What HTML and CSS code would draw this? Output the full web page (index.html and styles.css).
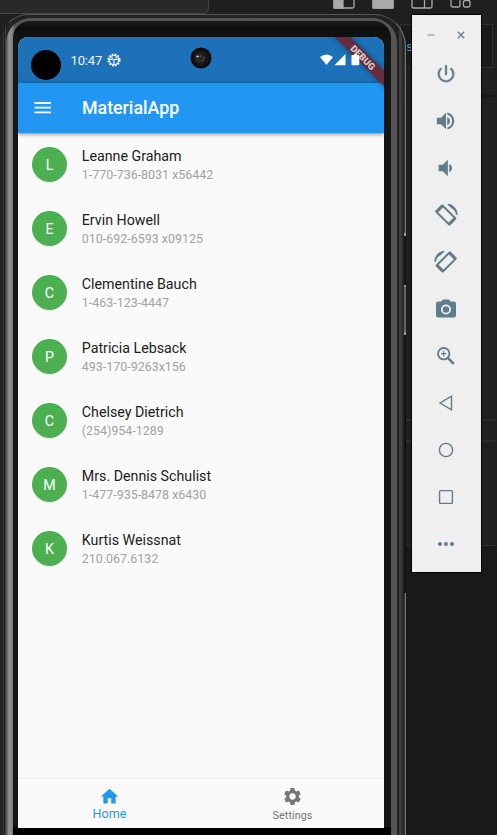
FILE: index.html
```
<!DOCTYPE html>
<html lang="en">
<head>
<meta charset="utf-8">
<title>MaterialApp</title>
<link rel="stylesheet" href="styles.css">
</head>
<body>
<div class="desktop">
  <div class="tab-window"></div>
  <div class="layout-icons">
    <svg viewBox="0 0 22 20"><rect x="1" y="1" width="20" height="18" rx="1.5"/><path class="solid" d="M1 1h9v18H1z"/></svg>
    <svg viewBox="0 0 22 20"><rect x="1" y="1" width="20" height="18" rx="1.5"/><path class="solid" d="M1 10h20v9H1z"/></svg>
    <svg viewBox="0 0 22 20"><rect x="1" y="1" width="20" height="18" rx="1.5"/><path d="M13.5 1v18"/></svg>
    <svg viewBox="0 0 22 20"><rect x="1" y="1" width="9" height="17" rx="1.500"/><rect x="13.500" y="11.500" width="6.500" height="6.500" rx="1.500"/></svg>
  </div>
  <div class="editor-strip"><span>s</span></div>
  <div class="panel-lines"></div>

  <div class="phone">
    <div class="rim"><div class="bezel">
      <div class="screen">
        <header class="status-bar">
          <span class="cutout"></span>
          <span class="clock">10:47</span>
          <svg class="status-gear" viewBox="0 0 14 14"><circle cx="7" cy="7" r="5.700" class="teeth"/><circle cx="7" cy="7" r="4.600" class="ring"/><path d="M2.800 6.500h8.400M7 6.500v4.600M5 3.500v3M9 3.500v3" class="ring"/></svg>
          <svg class="lens" viewBox="0 0 22 22"><circle cx="11" cy="11" r="10.500" fill="#0c0c0c"/><circle cx="11" cy="11" r="8" fill="#171717"/><circle cx="10" cy="11" r="5" fill="#262624"/><circle cx="7.500" cy="9.500" r="1.100" fill="#d8d8d8"/><circle cx="10.200" cy="9.300" r=".9" fill="#66665f"/><circle cx="14" cy="11" r=".9" fill="#624735"/><circle cx="12.700" cy="13.600" r=".9" fill="#735742"/></svg>
          <svg class="signals" viewBox="0 0 40 12"><path d="M0 3.100Q6.500-2 13 3.100L6.500 11z"/><path d="M25.500 0v11.300H14.500z"/><path d="M34 0h3v1h1.500q.8 0 .8.8v8.700q0 .8-.8.8h-6.200q-.8 0-.8-.8V1.800q0-.8.8-.8H34z"/></svg>
        </header>
        <div class="app-bar">
          <svg class="menu" viewBox="0 0 18 12"><path d="M.4 0h16.600v1.900H.4zM.4 4.700h16.600v1.900H.4zM.4 9.400h16.600v1.900H.4z"/></svg>
          <h1>MaterialApp</h1>
        </div>
        <main class="contacts">
          <div class="contact"><b>L</b><div><p>Leanne Graham</p><small>1-770-736-8031 x56442</small></div></div>
          <div class="contact"><b>E</b><div><p>Ervin Howell</p><small>010-692-6593 x09125</small></div></div>
          <div class="contact"><b>C</b><div><p>Clementine Bauch</p><small>1-463-123-4447</small></div></div>
          <div class="contact"><b>P</b><div><p>Patricia Lebsack</p><small>493-170-9263x156</small></div></div>
          <div class="contact"><b>C</b><div><p>Chelsey Dietrich</p><small>(254)954-1289</small></div></div>
          <div class="contact"><b>M</b><div><p>Mrs. Dennis Schulist</p><small>1-477-935-8478 x6430</small></div></div>
          <div class="contact"><b>K</b><div><p>Kurtis Weissnat</p><small>210.067.6132</small></div></div>
        </main>
        <nav class="bottom-nav">
          <div class="nav-item active"><svg viewBox="0 0 24 24"><path d="M10 20v-6h4v6h5v-8h3L12 3 2 12h3v8z"/></svg><span>Home</span></div>
          <div class="nav-item"><svg viewBox="0 0 24 24"><path d="M19.140 12.940c.04-.3.06-.61.06-.94 0-.32-.02-.64-.07-.94l2.030-1.580c.18-.14.23-.41.12-.61l-1.920-3.320c-.12-.22-.37-.29-.59-.22l-2.390.96c-.5-.38-1.030-.7-1.620-.94l-.36-2.540c-.04-.24-.24-.41-.48-.41h-3.840c-.24 0-.43.17-.47.41l-.36 2.540c-.59.24-1.130.57-1.620.94l-2.390-.96c-.22-.08-.47 0-.59.22L2.740 8.870c-.12.21-.08.47.12.61l2.030 1.580c-.05.3-.09.63-.09.94s.02.64.07.94l-2.030 1.580c-.18.14-.23.41-.12.61l1.920 3.320c.12.22.37.29.59.22l2.390-.96c.5.38 1.030.7 1.620.94l.36 2.540c.05.24.24.41.48.41h3.840c.24 0 .44-.17.47-.41l.36-2.540c.59-.24 1.130-.56 1.620-.94l2.390.96c.22.08.47 0 .59-.22l1.920-3.320c.12-.22.07-.47-.12-.61l-2.010-1.580zM12 15.600A3.600 3.600 0 1 1 12 8.400a3.600 3.600 0 0 1 0 7.200z"/></svg><span>Settings</span></div>
        </nav>
        <div class="debug-ribbon">DEBUG</div>
      </div>
    </div></div>
    <div class="side-keys"></div>
  </div>

  <aside class="toolbar">
    <div class="window-buttons">
      <svg viewBox="0 0 10 10"><path d="M1.500 5h7" stroke="#a0b0b7" stroke-width="1.600"/></svg>
      <svg viewBox="0 0 10 10"><path d="M1.800 1.800l6.400 6.400M8.200 1.800L1.800 8.200" stroke="#607d8b" stroke-width="1.300"/></svg>
    </div>
    <div class="tools">
      <svg viewBox="0 0 24 24"><path d="M13 2.500h-2v10.500h2zM17.830 5.170l-1.420 1.420A6.900 6.900 0 0 1 19 12a7 7 0 1 1-11.420-5.420L6.170 5.170A8.900 8.900 0 0 0 3 12a9 9 0 1 0 18 0c0-2.740-1.230-5.180-3.170-6.830z" stroke="#607d8b" stroke-width=".5"/></svg>
      <svg viewBox="0 0 24 24"><path d="M2 8.500v7h4.500l5.500 5.500V3L6.500 8.500zM13.300 7.500v9A4.800 4.800 0 0 0 16.300 12a4.800 4.800 0 0 0-3-4.500zM13.500 2.700v2.400a7.200 7.200 0 0 1 0 13.800v2.400a9.500 9.500 0 0 0 0-18.600z"/></svg>
      <svg viewBox="0 0 24 24"><path d="M4 8.500v7h4.500l5.500 5.500V3L8.500 8.500zM15.500 7.500v9a4.800 4.800 0 0 0 3-4.500 4.800 4.800 0 0 0-3-4.500z"/></svg>
      <svg class="rotate" viewBox="0 0 24 24"><g transform="translate(24 0) scale(-1 1)"><path d="M7.300 5.500A9.200 9.200 0 0 1 10.700 2.500l-1-.8C5 2.500 1.400 6.700 1.100 11.700h1.700c.2-2.500 1.700-4.900 4.500-6.200z"/><path fill-rule="evenodd" d="M14.600 2.600c.5-.5 1.300-.5 1.800 0l5.200 5.200c.5.500.5 1.300 0 1.800L9.800 21.400c-.5.5-1.300.5-1.800 0l-5.200-5.200c-.5-.5-.5-1.300 0-1.800zM14.700 5L5.200 14.500l4.500 4.500 9.500-9.500z"/></g></svg>
      <svg class="rotate" viewBox="0 0 24 24"><path d="M7.300 5.500A9.200 9.200 0 0 1 10.700 2.500l-1-.8C5 2.500 1.400 6.700 1.100 11.700h1.700c.2-2.500 1.700-4.900 4.500-6.200z"/><path fill-rule="evenodd" d="M14.600 2.600c.5-.5 1.300-.5 1.800 0l5.200 5.200c.5.500.5 1.300 0 1.800L9.800 21.400c-.5.5-1.300.5-1.800 0l-5.200-5.200c-.5-.5-.5-1.300 0-1.800zM14.700 5L5.200 14.500l4.500 4.500 9.500-9.500z"/></svg>
      <svg class="large" viewBox="0 0 24 24"><path fill-rule="evenodd" d="M9 2.500L7.200 4.500H4a2 2 0 0 0-2 2v12a2 2 0 0 0 2 2h16a2 2 0 0 0 2-2v-12a2 2 0 0 0-2-2h-3.200L15 2.500zM12 7.500a5 5 0 1 1 0 10 5 5 0 0 1 0-10z"/><circle cx="12" cy="12.500" r="3.200"/></svg>
      <svg viewBox="0 0 24 24"><g fill="none" stroke="#607d8b"><circle cx="9.500" cy="9.500" r="6.200" stroke-width="2"/><path d="M14 14l6.500 6.500" stroke-width="2.700"/><path d="M6.500 9.500h6M9.500 6.500v6" stroke-width="1.300"/></g></svg>
      <svg viewBox="0 0 24 24"><path class="line" d="M18 4.500v15L5.500 12z"/></svg>
      <svg viewBox="0 0 24 24"><circle class="line" cx="12" cy="12" r="7.200"/></svg>
      <svg viewBox="0 0 24 24"><rect class="line" x="5" y="5" width="14" height="14" rx="1"/></svg>
      <svg viewBox="0 0 24 24"><circle cx="5.500" cy="12" r="2.200"/><circle cx="12" cy="12" r="2.200"/><circle cx="18.500" cy="12" r="2.200"/></svg>
    </div>
  </aside>
</div>
</body>
</html>
```
FILE: styles.css
```
* { box-sizing: border-box; }
body { margin: 0; background: #191919; font-family: Roboto, "Liberation Sans", sans-serif; }
svg { display: block; }
.desktop { position: relative; width: 497px; height: 835px; overflow: hidden; background: linear-gradient(#1f1f1f 0 545px, #191919 545px); }
.tab-window { position: absolute; left: -4px; top: -4px; width: 213px; height: 18px; background: #292929; border: 1px solid #444; border-radius: 0 0 6px 0; }
.layout-icons { position: absolute; left: 333px; top: -11px; display: flex; gap: 17px; }
.layout-icons svg { width: 22px; height: 20px; fill: none; stroke: #aaa; stroke-width: 1.300; }
.layout-icons .solid { fill: #aaa; }
.editor-strip { position: absolute; left: 400px; top: 24px; width: 93px; height: 44px; padding-left: 5px; background: #1a1a1a; border: 1px solid #303030; color: #4fa3d1; font: 12px/47px "Liberation Mono", monospace; }
.panel-lines { position: absolute; left: 405px; top: 95px; width: 92px; height: 451px; border-top: 2px solid #161616; border-bottom: 1px solid #303030; background: linear-gradient(transparent 322px, #2d2d2d 322px 324px, transparent 324px 343px, #2d2d2d 343px 345px, transparent 345px); }

.phone { position: absolute; left: 0; top: 14px; width: 406px; height: 850px; border: 1px solid #555; border-left-color: #222; border-right-color: #777; border-radius: 28px 32px 0 0; background: linear-gradient(90deg, #232323 0 2px, #383838 2px 3px, #1b1b1b 3px 4px, #444 4px 5px, #222 5px 395px, #222 397px 398px, #3b3b3b 398px 401px, #292929 401px 403px, #353535 403px); padding: 3px 8px 0 5px; }
.rim { height: 840px; padding: 3px 7px 0; border-radius: 25px 25px 0 0; background: linear-gradient(90deg, #4a4a4a 0, #929292 3px, #858585 6px, #555 9px, #555 100%); }
.bezel { height: 837px; margin-right: -1px; border-radius: 17px 17px 0 0; background: linear-gradient(#1b1b1b, #0d0d0d 8px, #151515 20px 806px, #000 807px); padding: 16px 6px 0 5px; }
.side-keys { position: absolute; left: 403px; top: 186px; width: 2px; height: 392px; background: linear-gradient(transparent 0 32px, #999 32px 35px, #111 35px 84px, #999 84px 86px, #666 86px 131px, #999 131px 134px, #111 134px); }

.screen { position: relative; width: 366px; height: 791px; display: flex; flex-direction: column; overflow: hidden; border-radius: 10px 10px 0 0; background: #fafafa; }
.status-bar { position: relative; flex: 0 0 46px; display: flex; align-items: center; padding-left: 13px; background: #1d71b8; color: #eef5fb; }
.cutout { width: 30px; height: 30px; margin-top: 10px; border-radius: 50%; background: #000; }
.clock { margin-left: 9.500px; font-size: 13px; letter-spacing: -.15px; }
.status-gear { width: 14px; height: 14px; margin-left: 4.500px; margin-top: -1px; fill: none; stroke: #eef5fb; }
.teeth { stroke-width: 1.800; stroke-dasharray: 1.800 1.180; }
.ring { stroke-width: 1.200; }
.lens { width: 22px; height: 22px; margin-left: 69px; margin-top: -4px; }
.signals { position: relative; z-index: 2; width: 40px; height: 12px; margin-left: 108px; margin-top: -1px; flex: none; fill: #fff; }
.app-bar { position: relative; flex: 0 0 49.500px; display: flex; align-items: center; padding-left: 16px; background: #2196f3; color: #fff; box-shadow: 0 1px 4px rgba(0,0,0,.5); }
.menu { width: 18px; height: 12px; fill: #fff; }
.app-bar h1 { margin: 0 0 0 30px; font-size: 17.800px; font-weight: 500; letter-spacing: 0; }
.contacts { flex: 1; }
.contact { display: flex; align-items: center; height: 64px; padding-left: 13.700px; }
.contact b { display: grid; place-items: center; width: 35.600px; height: 35.600px; border-radius: 50%; background: #4caf50; color: #fff; font-size: 14.200px; font-weight: 400; }
.contact > div { margin-left: 14.500px; }
.contact p { margin: 0; font-size: 14.240px; line-height: 19px; color: #212121; letter-spacing: 0; }
.contact small { display: block; font-size: 12.460px; line-height: 17px; color: #a2a2a2; letter-spacing: 0; }
.bottom-nav { flex: 0 0 51px; display: flex; border-top: 2px solid #f3f3f3; }
.nav-item { flex: 1; display: flex; flex-direction: column; align-items: center; padding-top: 7px; color: #757575; font-size: 10.700px; line-height: 17px; letter-spacing: .1px; }
.nav-item svg { width: 21px; height: 21px; fill: currentColor; }
.nav-item.active { color: #2196f3; font-size: 12.460px; line-height: 14px; }
.debug-ribbon { position: absolute; right: -39px; top: 15px; width: 120px; height: 11px; transform: rotate(45deg); background: #642c3d; color: #d6c8cc; font-size: 9.500px; line-height: 11px; font-weight: 900; text-align: center; box-shadow: 0 0 5px rgba(0,0,0,.4); }

.toolbar { position: absolute; left: 411px; top: 14px; width: 71px; height: 559px; border: 1px solid #000; background: #efefef; }
.window-buttons { display: flex; justify-content: space-between; padding: 15px 15px 0 14px; }
.window-buttons svg { width: 10px; height: 10px; }
.tools { display: grid; grid-auto-rows: 47px; place-items: center; padding-top: 10px; margin-left: -1px; }
.tools svg { width: 22px; height: 22px; fill: #607d8b; }
.tools .large { width: 24px; height: 24px; }
.tools .rotate { width: 26px; height: 26px; }
.tools .line { fill: none; stroke: #607d8b; stroke-width: 1.500; }
```
